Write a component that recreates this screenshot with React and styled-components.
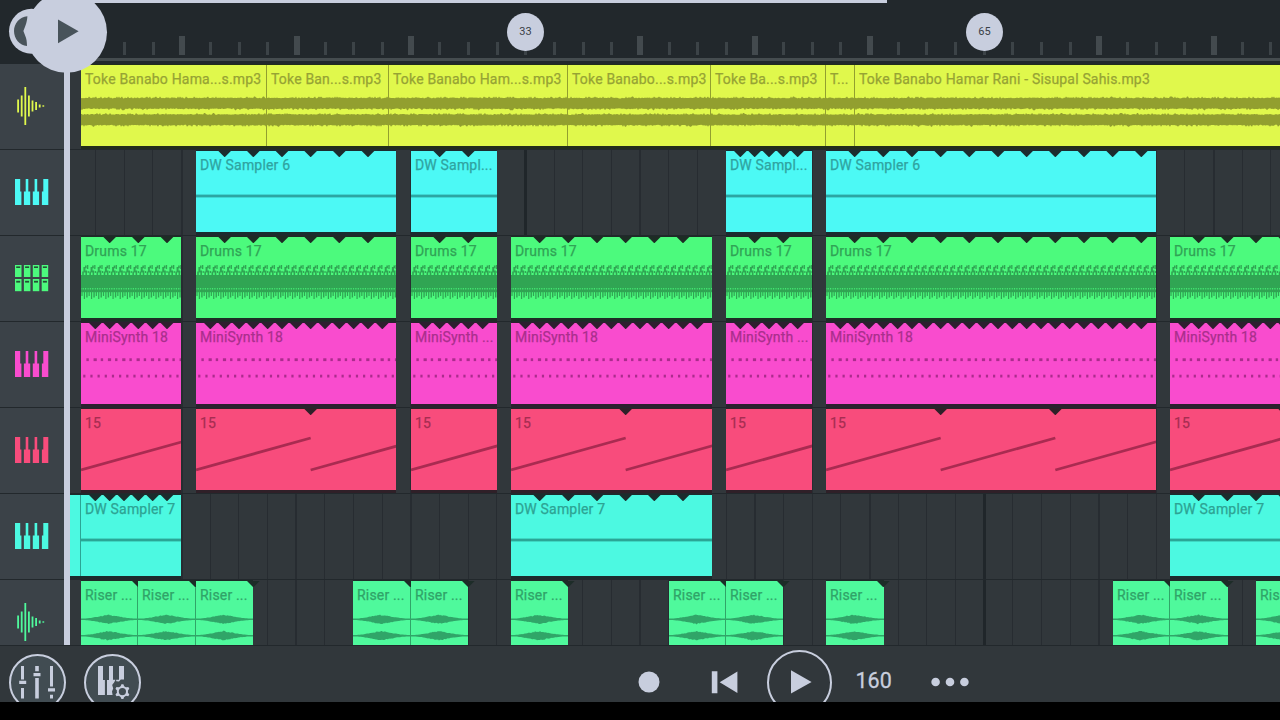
import React from "react";
import styled, { createGlobalStyle } from "styled-components";

const BAR = 14.333;
const ORIGIN = 67;
const LANES_LEFT = 70;

const YELLOW = { fill: "#e0f84c", ink: "#929f2f", text: "#96a334", shade: "#222d1c" };
const CYAN = { fill: "#4cf9f5", ink: "#2ca6a3", text: "#2fa3a0", shade: "#1b2c2f" };
const GREEN = { fill: "#4cfa7d", ink: "#30a553", text: "#30a355", shade: "#1d2c25" };
const PINK = { fill: "#f94cce", ink: "#ab2c8d", text: "#a92f8c", shade: "#2d1f2f" };
const RED = { fill: "#f84c7c", ink: "#a92b51", text: "#a62d51", shade: "#2f2028" };
const TEAL = { fill: "#4cf9e1", ink: "#2ba595", text: "#2da393", shade: "#1b2c2c" };
const MINT = { fill: "#4ff99c", ink: "#30a568", text: "#30a368", shade: "#1d2c28" };

// clips: [start, end, label, notch period in bars]
const tracks = [
   {
      id: "song",
      icon: "wave",
      art: "audio",
      color: YELLOW,
      clips: [
         [81, 267, "Toke Banabo Hama...s.mp3"],
         [267, 389, "Toke Ban...s.mp3"],
         [389, 568, "Toke Banabo Ham...s.mp3"],
         [568, 711, "Toke Banabo...s.mp3"],
         [711, 826, "Toke Ba...s.mp3"],
         [826, 855, "T..."],
         [855, 1290, "Toke Banabo Hamar Rani - Sisupal Sahis.mp3"],
      ],
   },
   {
      id: "sampler6",
      icon: "keys",
      art: "line",
      color: CYAN,
      clips: [
         [196, 396, "DW Sampler 6", 2],
         [411, 497, "DW Sampl...", 2],
         [726, 812, "DW Sampl...", 1],
         [826, 1156, "DW Sampler 6", 2],
      ],
   },
   {
      id: "drums",
      icon: "pads",
      art: "drums",
      color: GREEN,
      clips: [
         [81, 181, "Drums 17", 2],
         [196, 396, "Drums 17", 2],
         [411, 497, "Drums 17", 2],
         [511, 712, "Drums 17", 2],
         [726, 812, "Drums 17", 2],
         [826, 1156, "Drums 17", 2],
         [1170, 1290, "Drums 17", 2],
      ],
   },
   {
      id: "synth",
      icon: "keys",
      art: "notes",
      color: PINK,
      clips: [
         [81, 181, "MiniSynth 18", 1],
         [196, 396, "MiniSynth 18", 1],
         [411, 497, "MiniSynth ...", 1],
         [511, 712, "MiniSynth 18", 1],
         [726, 812, "MiniSynth ...", 1],
         [826, 1156, "MiniSynth 18", 1],
         [1170, 1290, "MiniSynth 18", 1],
      ],
   },
   {
      id: "fifteen",
      icon: "keys",
      art: "ramp",
      color: RED,
      clips: [
         [81, 181, "15", 8],
         [196, 396, "15", 8],
         [411, 497, "15", 8],
         [511, 712, "15", 8],
         [726, 812, "15", 8],
         [826, 1156, "15", 8],
         [1170, 1290, "15", 8],
      ],
   },
   {
      id: "sampler7",
      icon: "keys",
      art: "line",
      color: TEAL,
      clips: [
         [70, 81, ""],
         [81, 181, "DW Sampler 7", 1],
         [511, 712, "DW Sampler 7", 2],
         [1170, 1290, "DW Sampler 7", 2],
      ],
   },
   {
      id: "riser",
      icon: "wave",
      art: "riser",
      color: MINT,
      clips: [
         [81, 138, "Riser ...", 4],
         [138, 196, "Riser ...", 4],
         [196, 253, "Riser ...", 4],
         [353, 411, "Riser ...", 4],
         [411, 468, "Riser ...", 4],
         [511, 568, "Riser ...", 4],
         [669, 726, "Riser ...", 4],
         [726, 783, "Riser ...", 4],
         [826, 884, "Riser ...", 4],
         [1113, 1170, "Riser ...", 4],
         [1170, 1228, "Riser ...", 4],
         [1256, 1313, "Riser ...", 4],
      ],
   },
];

function noise(n) {
   const v = Math.sin(n * 12.9898) * 43758.5453;
   return v - Math.floor(v);
}

// closed outline of a stereo channel, amp(x) gives its half height
function outline(width, mid, amp, seed) {
   const top = [];
   const bottom = [];
   for (let x = 0; x <= width; x += 1) {
      top.push(`${x} ${(mid - amp(x, noise(x + seed))).toFixed(1)}`);
      bottom.unshift(`${x} ${(mid + amp(x, noise(x * 1.7 + seed + 9))).toFixed(1)}`);
   }
   return `M${top.join("L")}L${bottom.join("L")}Z`;
}

function Art({ kind, width, start, ink }) {
   if (kind === "audio") {
      const amp = (x, n) => 4.9 + (n > 0.9 ? 2 : n * 1.2);
      return (
         <g fill={ink}>
            <path d={outline(width, 38.3, amp, start)} />
            <path d={outline(width, 54.8, amp, start + 50)} />
         </g>
      );
   }
   if (kind === "line") {
      return width > 20 ? <rect x="0" y="43.6" width={width} height="2.8" fill={ink} /> : null;
   }
   if (kind === "drums") {
      const beats = [];
      for (let x = 0; x < width; x += BAR / 2) beats.push(x);
      return (
         <g fill={ink}>
            <rect y="38" width={width} height="13.2" />
            <rect y="52.4" width={width} height="2.8" />
            {beats.map((x) => (
               <path
                  key={x}
                  d={`M${x + 2.4} 30h1.6v-1.400h1.600v2.600h-1.200v2.400h1.600v4.600h-1.600v-2.600h-1.600v2.600h-1.600v-3.600h1.200zM${x + 6} 28h1.300v4h-1.300zM${x + 6.600} 34h1.200v2h-1.200zM${x + 0.4} 51h1.2v8h-1.2zM${x + 2.8} 51h1.2v11h-1.2zM${x + 5.2} 51h1.400v9.500h-1.400z`}
               />
            ))}
         </g>
      );
   }
   if (kind === "notes") {
      const notes = [];
      for (let i = 0; i * (BAR / 2) < width; i += 1) notes.push(i);
      return (
         <g fill={ink}>
            {notes.map((i) => (
               <React.Fragment key={i}>
                  <rect x={5.4 + (i * BAR) / 2} y="35.3" width={i % 2 ? 3.2 : 2.4} height="2.8" />
                  <rect x={2.2 + (i * BAR) / 2} y="51.7" width="2.2" height="2.8" />
               </React.Fragment>
            ))}
         </g>
      );
   }
   if (kind === "ramp") {
      const len = BAR * 8;
      const parts = [];
      for (let x = 0; x < width; x += len) parts.push(x);
      return (
         <g stroke={ink} strokeWidth="2.8">
            {parts.map((x) => (
               <line key={x} x1={x} y1="61" x2={x + len} y2="29" />
            ))}
         </g>
      );
   }
   const swell = (x, n) => {
      const t = x / width;
      const s = t < 0.48 ? t / 0.48 : (1 - t) / 0.52;
      return 0.7 + Math.sin((s * Math.PI) / 2) * s * (3 + n * 1.3);
   };
   return (
      <g fill={ink}>
         <path d={outline(width, 38.3, swell, start)} />
         <path d={outline(width, 54.7, swell, start + 31)} />
      </g>
   );
}

function Clip({ clip, gap, joined, art, color }) {
   const [start, end, label, period] = clip;
   const width = end - start;
   const notches = [];
   if (period) {
      const limit = art === "riser" ? width + 2 : width - 3;
      for (let x = period * BAR; x < limit; x += period * BAR) notches.push(x);
   }
   return (
      <ClipBox $gap={gap} $width={width} $color={color} $joined={joined}>
         <ArtLayer width={width} height="81">
            <Art kind={art} width={width} start={start} ink={color.ink} />
         </ArtLayer>
         <NotchLayer width={width} height="81">
            {notches.map((x) => (
               <path key={x} d={`M${x - 6.3} 0h12.6L${x + 0.3} 6h-.6z`} fill={color.shade} />
            ))}
         </NotchLayer>
         <ClipLabel $color={color.text}>{label}</ClipLabel>
      </ClipBox>
   );
}

function TrackIcon({ kind, color }) {
   if (kind === "wave") {
      const bars = [13, 21, 38, 21, 11, 8, 3, 1.4];
      return (
         <svg width="34" height="40" fill={color}>
            {bars.map((h, i) => (
               <rect key={i} x={2.2 + i * 3.6} y={20 - h / 2} width="1.8" height={h} />
            ))}
         </svg>
      );
   }
   if (kind === "pads") {
      return (
         <svg width="34" height="28">
            {[0, 1, 2, 3].map((i) => (
               <g key={i}>
                  <rect x={i * 8.9} y="1" width="6.5" height="12" fill={color} />
                  <rect x={i * 8.9} y="15" width="6.5" height="12.2" fill={color} />
                  <rect x={i * 8.9 + 1.2} y="2.4" width="4" height="1.6" fill="#245236" />
                  <rect x={i * 8.9 + 1.2} y="16.8" width="4" height="1.8" fill="#245236" />
               </g>
            ))}
         </svg>
      );
   }
   return (
      <svg width="34" height="28" fill={color}>
         <path d="M0 1h5.2v12.4h1.2V27H0zM10.7 1h2.6v12.4h1.9V27H8.9V13.4h1.8zM19.6 1h2.6v12.4h1.9V27h-6.3V13.4h1.8zM28.3 1h5V27h-6.4V13.4h1.4z" />
      </svg>
   );
}

function GridLines() {
   const lines = [];
   for (let k = 1; k <= 42; k += 1) {
      const x = ORIGIN + k * BAR * 2 - LANES_LEFT;
      let w = 1;
      if (k % 4 === 0) w = 2;
      if (k % 16 === 0) w = 3;
      lines.push(
         <rect key={k} x={Math.round(x - w / 2)} width={w} height="581" fill={w === 3 ? "#20262a" : "#272c31"} />
      );
   }
   return (
      <GridLayer width="1210" height="581">
         {lines}
      </GridLayer>
   );
}

export default function App() {
   const ticks = Array.from({ length: 42 }, (_, i) => i + 1);
   return (
      <Screen>
         <GlobalStyle />
         <Header>
            <Ruler>
               {ticks.map((k) => (
                  <TickCell key={k}>
                     <Tick $big={k % 4 === 0 && k % 16 !== 0} />
                  </TickCell>
               ))}
            </Ruler>
            <Progress />
            <Marker $x={525.5}>33</Marker>
            <Marker $x={984.5}>65</Marker>
         </Header>
         <Playlist>
            <TrackList>
               {tracks.map((t) => (
                  <TrackHead key={t.id}>
                     <TrackIcon kind={t.icon} color={t.color.fill} />
                  </TrackHead>
               ))}
            </TrackList>
            <PlayLine />
            <Lanes>
               <GridLines />
               {tracks.map((t) => (
                  <Lane key={t.id}>
                     {t.clips.map((clip, i) => {
                        const before = i ? t.clips[i - 1][1] : LANES_LEFT;
                        const after = t.clips[i + 1];
                        return (
                           <Clip
                              key={clip[0]}
                              clip={clip}
                              gap={clip[0] - before}
                              joined={Boolean(after && after[0] === clip[1])}
                              art={t.art}
                              color={t.color}
                           />
                        );
                     })}
                  </Lane>
               ))}
            </Lanes>
         </Playlist>
         <Toolbar>
            <RoundButton>
               <ButtonIcon width="53" height="52" fill="#c8cede">
                  <path d="M10 9h3v13.400h-3zM8.200 23.800h7v3.200h-7zM10 31h3v10.400h-3zM24.200 9h3.600v5.200h-3.600zM22.500 16h7v3.200h-7zM24.200 21h3.600v20.400h-3.600zM39 9h3v20.600h-3zM37 31.300h7v3.200h-7zM39 37.800h3v3.600h-3z" />
               </ButtonIcon>
            </RoundButton>
            <RoundButton>
               <ButtonIcon width="53" height="52" fill="#c8cede">
                  <path d="M12 9h5v14h1.900v15h-6.900zM23 9h4v13.800h2.400c-.6 2.400-2.200 3.600-3.200 5.200l1 3.600-1.200 3 .6 3.400h-5.600V23h2zM33 9h5v13.600l-3.200-.2-1.800 2-2.800-.2V22.800H33z" />
                  <circle cx="36.400" cy="34.600" r="4.600" fill="none" stroke="#c8cede" strokeWidth="2" />
                  {[0, 60, 120, 180, 240, 300].map((a) => (
                     <path key={a} d="M34.200 30.400l1.200-3.200h2l1.200 3.200z" transform={`rotate(${a} 36.400 34.600)`} />
                  ))}
               </ButtonIcon>
            </RoundButton>
            <Transport>
               <svg width="22" height="22" fill="#c8cede">
                  <circle cx="11" cy="11" r="10.5" />
               </svg>
               <PrevIcon width="27" height="23" fill="#c8cede">
                  <path d="M.8 .3h5.6v22H.8zM26.400 .5v21.600L8.700 11.300z" />
               </PrevIcon>
               <PlayButton>
                  <svg width="22" height="24" fill="#c8cede">
                     <path d="M1 .2v23.4L21.6 12z" />
                  </svg>
               </PlayButton>
               <Tempo>160</Tempo>
               <svg width="38" height="10" fill="#c8cede">
                  <circle cx="4.600" cy="5" r="4.300" />
                  <circle cx="19" cy="5" r="4.300" />
                  <circle cx="33.400" cy="5" r="4.300" />
               </svg>
            </Transport>
         </Toolbar>
         <PlayHead width="110" height="76">
            <circle cx="31.500" cy="31.300" r="22.500" fill="#c8cede" />
            <circle cx="66.500" cy="32.300" r="40.500" fill="#c8cede" />
            <path
               d="M27.400 16.200C19.500 16.600 14 23.500 14 31s5.500 14.600 13 15c0-4-.5-7-1.600-9.700l-2-5.200 2-5.300c1.200-3.200 1.800-6.200 2-9.600z"
               fill="#48535a"
            />
            <path d="M58 19.600v23.600l20.600-11.900z" fill="#48535a" />
         </PlayHead>
      </Screen>
   );
}

const GlobalStyle = createGlobalStyle`
   * {
      box-sizing: border-box;
   }

   body {
      margin: 0;
      background-color: #000;
   }
`;

const Screen = styled.div`
   position: relative;
   display: flex;
   flex-direction: column;
   width: 1280px;
   height: 720px;
   overflow: hidden;
   background-color: #000;
   color: #c8cede;
   font-family: Roboto, "Liberation Sans", sans-serif;
`;

const Header = styled.div`
   position: relative;
   flex: none;
   height: 64px;
   background-color: #22282c;
`;

const Ruler = styled.div`
   display: flex;
   height: 61px;
   margin-left: 70px;
   padding-left: 11.6px;
   overflow: hidden;
   border-bottom: 3px solid #454c4f;
`;

const TickCell = styled.div`
   flex: none;
   display: flex;
   justify-content: center;
   align-items: flex-end;
   width: 28.666px;
   height: 55px;
`;

const Tick = styled.div`
   width: ${({ $big }) => ($big ? "6px" : "3px")};
   height: ${({ $big }) => ($big ? "19px" : "13px")};
   background-color: ${({ $big }) => ($big ? "#434a4e" : "#3c4347")};
`;

const Progress = styled.div`
   position: absolute;
   top: 0;
   left: 66px;
   width: 821px;
   height: 3px;
   background-color: #c8cede;
`;

const Marker = styled.div`
   position: absolute;
   top: 13px;
   left: ${({ $x }) => $x - 18.5}px;
   width: 37px;
   height: 38px;
   border-radius: 50%;
   background-color: #c8cede;
   color: #3a4147;
   font-size: 11px;
   line-height: 37px;
   text-align: center;
`;

const Playlist = styled.div`
   flex: none;
   display: flex;
   height: 581px;
   overflow: hidden;
`;

const TrackList = styled.div`
   flex: none;
   width: 64px;
   background-color: #3b4248;
`;

const TrackHead = styled.div`
   display: flex;
   justify-content: center;
   align-items: center;
   height: 86px;
   padding-bottom: 1px;
   border-bottom: 1px solid #22282c;

   svg {
      display: block;
      margin-left: -1px;
   }
`;

const PlayLine = styled.div`
   flex: none;
   width: 6px;
   background-color: #c8cede;
`;

const Lanes = styled.div`
   position: relative;
   flex: none;
   width: 1210px;
   overflow: hidden;
   background-color: #31373b;
`;

const GridLayer = styled.svg`
   position: absolute;
   top: 0;
   left: 0;
`;

const Lane = styled.div`
   position: relative;
   display: flex;
   height: 86px;
   padding-top: 1px;
   border-bottom: 1px solid #22282c;
`;

const ClipBox = styled.div`
   position: relative;
   flex: none;
   width: ${({ $width }) => $width}px;
   height: 81px;
   margin-left: ${({ $gap }) => $gap}px;
   border-right: ${({ $joined, $color }) => ($joined ? `1px solid ${$color.ink}` : "none")};
   background-color: ${({ $color }) => $color.fill};
   box-shadow: 0 3px 0 ${({ $color }) => $color.shade}, 0 -1px 0 ${({ $color }) => $color.shade};
`;

const ArtLayer = styled.svg`
   position: absolute;
   top: 0;
   left: 0;
   overflow: hidden;
`;

const NotchLayer = styled.svg`
   position: absolute;
   top: 0;
   left: 0;
   overflow: visible;
`;

const ClipLabel = styled.div`
   position: relative;
   padding-left: 4px;
   color: ${({ $color }) => $color};
   font-size: 14px;
   letter-spacing: 0.18px;
   line-height: 28px;
   white-space: nowrap;
   -webkit-text-stroke: 0.25px ${({ $color }) => $color};
`;

const Toolbar = styled.div`
   flex: none;
   display: flex;
   align-items: flex-start;
   gap: 18px;
   height: 57px;
   padding: 8px 0 0 9px;
   overflow: hidden;
   border-top: 1px solid #22282c;
   background-color: #31373b;
`;

const RoundButton = styled.div`
   flex: none;
   width: 57px;
   height: 57px;
   border: 2px solid #c8cede;
   border-radius: 50%;
   background-color: #414c52;
`;

const ButtonIcon = styled.svg`
   display: block;
   margin-top: 1px;
`;

const Transport = styled.div`
   display: flex;
   align-items: center;
   height: 66px;
   margin: -5px 0 0 478.5px;
`;

const PrevIcon = styled.svg`
   margin-left: 51px;
`;

const PlayButton = styled.div`
   display: flex;
   justify-content: center;
   align-items: center;
   width: 65px;
   height: 65px;
   margin-left: 29px;
   padding-left: 3px;
   border: 2px solid #c8cede;
   border-radius: 50%;
`;

const Tempo = styled.div`
   width: 74px;
   padding-left: 24px;
   margin-right: 25px;
   margin-top: -3px;
   font-size: 21.5px;
   line-height: 24px;
   white-space: nowrap;
   -webkit-text-stroke: 0.3px #c8cede;
`;

const PlayHead = styled.svg`
   position: absolute;
   top: 0;
   left: 0;
`;
